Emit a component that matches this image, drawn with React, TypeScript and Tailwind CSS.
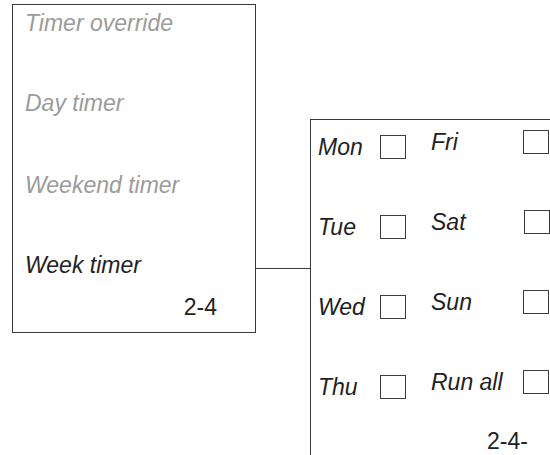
import React from "react";

const Box = () => (
  <div className="w-[26px] h-[24px] border-[1.5px] border-[#3c3c3c] bg-white shrink-0" />
);

const Row = ({ label, labelW }: { label: string; labelW: string }) => (
  <div className="flex items-center h-[28px]">
    <span className={`${labelW} italic text-[#222] text-[23px] leading-[28px] whitespace-nowrap`}>{label}</span>
    <Box />
  </div>
);

export default function App() {
  return (
    <div
      className="w-[550px] h-[455px] bg-white overflow-hidden flex items-start"
      style={{ fontFamily: '"Liberation Sans", Arial, sans-serif' }}
    >
      {/* Left menu box */}
      <div className="ml-[12px] mt-[4px] w-[244px] h-[329px] border border-[#3a3a3a] shrink-0 flex flex-col pl-[12px] pt-[4px]">
        <div className="italic text-[23px] leading-[28px] text-[#9b9b9b] whitespace-nowrap">Timer override</div>
        <div className="mt-[52px] italic text-[23px] leading-[28px] text-[#9b9b9b] whitespace-nowrap">Day timer</div>
        <div className="mt-[54px] italic text-[23px] leading-[28px] text-[#9b9b9b] whitespace-nowrap">Weekend timer</div>
        <div className="mt-[52px] italic text-[23px] leading-[28px] text-[#222] whitespace-nowrap">Week timer</div>
        <div className="mt-[14px] flex justify-end pr-[38px]">
          <span className="text-[23px] leading-[28px] text-[#222]">2-4</span>
        </div>
      </div>

      {/* Connector */}
      <div className="mt-[268px] w-[54px] h-px bg-[#3a3a3a] shrink-0" />

      {/* Right week box */}
      <div className="mt-[119px] w-[260px] h-[360px] border-l border-t border-[#3a3a3a] shrink-0 flex flex-col">
        <div className="flex pl-[7px]">
          <div className="flex flex-col gap-[52px] pt-[13px]">
            <Row label="Mon" labelW="w-[62px]" />
            <Row label="Tue" labelW="w-[62px]" />
            <Row label="Wed" labelW="w-[62px]" />
            <Row label="Thu" labelW="w-[62px]" />
          </div>
          <div className="flex flex-col gap-[52px] pt-[8px] ml-[25px]">
            <Row label="Fri" labelW="w-[92px]" />
            <Row label="Sat" labelW="w-[93px]" />
            <Row label="Sun" labelW="w-[92px]" />
            <Row label="Run all" labelW="w-[92px]" />
          </div>
        </div>
        <div className="mt-[26px] pl-[176px]">
          <span className="text-[23px] leading-[28px] text-[#222]">2-4-</span>
        </div>
      </div>
    </div>
  );
}
